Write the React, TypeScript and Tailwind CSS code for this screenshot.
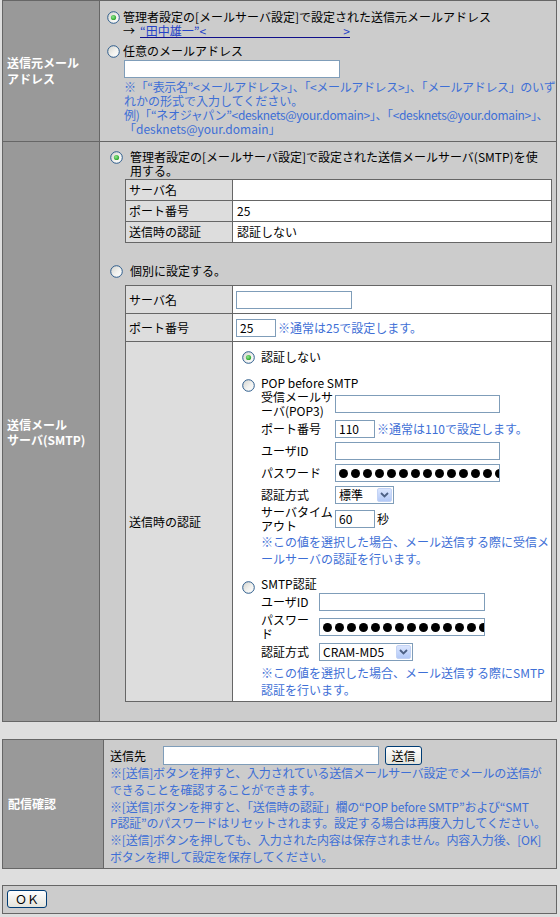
import React from "react";

const BLUE = "text-[#3e6fd6]";

function Radio({ checked = false, className = "" }: { checked?: boolean; className?: string }) {
  return (
    <svg width="13" height="13" viewBox="0 0 13 13" className={"shrink-0 " + className}>
      <defs>
        <linearGradient id="rfill" x1="0" y1="0" x2="1" y2="1">
          <stop offset="0" stopColor="#d2d2cc" />
          <stop offset="0.55" stopColor="#f2f2ef" />
          <stop offset="1" stopColor="#ffffff" />
        </linearGradient>
        <radialGradient id="rdot" cx="0.4" cy="0.4" r="0.7">
          <stop offset="0" stopColor="#8fe88f" />
          <stop offset="1" stopColor="#1d9a1d" />
        </radialGradient>
      </defs>
      <circle cx="6.5" cy="6.5" r="5.8" fill="url(#rfill)" stroke="#2d5c8c" strokeWidth="1" />
      {checked && <circle cx="6.5" cy="6.5" r="2.6" fill="url(#rdot)" />}
    </svg>
  );
}

function Input({ className = "", value = "" }: { className?: string; value?: string }) {
  return (
    <div className={"shrink-0 border border-[#7f9db9] bg-white flex items-center pl-[3px] leading-[14px] " + className}>
      {value}
    </div>
  );
}

function Password({ className = "" }: { className?: string }) {
  return (
    <div className={"shrink-0 h-[18px] border border-[#7f9db9] bg-white flex items-center gap-[3px] pl-[3px] overflow-hidden " + className}>
      {Array.from({ length: 16 }).map((_, i) => (
        <span key={i} className="shrink-0 w-[9px] h-[9px] rounded-full bg-black" />
      ))}
    </div>
  );
}

function Select({ label, className = "" }: { label: string; className?: string }) {
  return (
    <div className={"shrink-0 h-[18px] border border-[#7f9db9] bg-white flex items-center " + className}>
      <span className="flex-1 pl-[3px] leading-[14px] whitespace-nowrap">{label}</span>
      <span className="w-[15px] h-[14px] mr-[1px] rounded-[2px] bg-linear-to-b from-[#dbe6fe] to-[#b3c9f7] border border-[#c3d3f5] flex items-center justify-center">
        <svg width="9" height="6" viewBox="0 0 9 6">
          <path d="M1 1 L4.5 4.5 L8 1" fill="none" stroke="#4d6185" strokeWidth="1.8" />
        </svg>
      </span>
    </div>
  );
}

function XpButton({ children, className = "" }: { children: React.ReactNode; className?: string }) {
  return (
    <div className={"shrink-0 border border-[#003c74] rounded-[3px] bg-linear-to-b from-white to-[#e4e4dc] flex items-center justify-center leading-[14px] " + className}>
      {children}
    </div>
  );
}

function FRow({ label, labelW, h, children }: { label: React.ReactNode; labelW: string; h: string; children: React.ReactNode }) {
  return (
    <div className={"flex items-center " + h}>
      <div className={"shrink-0 whitespace-nowrap " + labelW}>{label}</div>
      {children}
    </div>
  );
}

export default function App() {
  return (
    <div className="font-['Noto_Sans_CJK_JP','Noto_Sans','DejaVu_Sans',sans-serif] w-[560px] min-h-[917px] bg-[#dedede] text-[12px] leading-[14px] text-black">
      {/* Section 1 */}
      <div className="ml-[2px] w-[555px] border border-[#666]">
        {/* Row: 送信元メールアドレス */}
        <div className="flex h-[141px] border-b border-[#666]">
          <div className="w-[97px] shrink-0 bg-[#999] border-r border-[#666] flex items-center pl-[4px] text-white font-bold leading-[16px]">
            <div>送信元メール<br />アドレス</div>
          </div>
          <div className="flex-1 bg-[#ccc] pl-[7px] pt-[9px] whitespace-nowrap">
            <div className="flex items-start">
              <Radio checked className="mt-[1px]" />
              <div className="ml-[3px]">
                <div>管理者設定の[メールサーバ設定]で設定された送信元メールアドレス</div>
                <div className="flex items-end h-[14px]">
                  <span className="inline-block w-[17px]">→</span>
                  <span className="inline-flex w-[210px] justify-between border-b border-[#10108a] text-[#2442c8] leading-[12px]">
                    <span>“田中雄一”&lt;</span>
                    <span>&gt;</span>
                  </span>
                </div>
              </div>
            </div>
            <div className="flex items-start mt-[6px]">
              <Radio className="mt-[1px]" />
              <div className="ml-[3px]">任意のメールアドレス</div>
            </div>
            <Input className="ml-[17px] mt-[2px] w-[216px] h-[18px]" />
            <div className={"ml-[17px] mt-[2px] " + BLUE}>
              <div className="tracking-[-0.35px]">※「“表示名”&lt;メールアドレス&gt;」、「&lt;メールアドレス&gt;」、「メールアドレス」のいず</div>
              <div>れかの形式で入力してください。</div>
              <div className="tracking-[-0.35px]">例)「“ネオジャパン”&lt;desknets@your.domain&gt;」、「&lt;desknets@your.domain&gt;」、</div>
              <div>「desknets@your.domain」</div>
            </div>
          </div>
        </div>

        {/* Row: 送信メールサーバ(SMTP) */}
        <div className="flex h-[579px]">
          <div className="w-[97px] shrink-0 bg-[#999] border-r border-[#666] flex items-center pl-[4px] text-white font-bold leading-[15px]">
            <div>送信メール<br />サーバ(SMTP)</div>
          </div>
          <div className="flex-1 bg-[#ccc] pl-[10px] pt-[8px] whitespace-nowrap">
            <div className="flex items-start">
              <Radio checked className="mt-[1px]" />
              <div className="ml-[7px]">
                <div>管理者設定の[メールサーバ設定]で設定された送信メールサーバ(SMTP)を使</div>
                <div>用する。</div>
              </div>
            </div>
            <div className="ml-[15px] mt-[1px] w-[427px] border border-[#666] bg-white divide-y divide-[#666]">
              {[
                ["サーバ名", ""],
                ["ポート番号", "25"],
                ["送信時の認証", "認証しない"],
              ].map(([l, v]) => (
                <div key={l} className="flex">
                  <div className="w-[107px] h-[20px] shrink-0 border-r border-[#666] bg-[#ddd] pl-[3px] flex items-center">{l}</div>
                  <div className="flex-1 h-[20px] pl-[4px] flex items-center">{v}</div>
                </div>
              ))}
            </div>

            <div className="flex items-center mt-[21px] h-[14px]">
              <Radio />
              <div className="ml-[7px]">個別に設定する。</div>
            </div>

            <div className="ml-[15px] mt-[7px] w-[427px] border border-[#666] bg-white divide-y divide-[#666]">
              <div className="flex">
                <div className="w-[107px] h-[27px] shrink-0 border-r border-[#666] bg-[#ddd] pl-[3px] flex items-center">サーバ名</div>
                <div className="flex-1 h-[27px] pl-[3px] flex items-center">
                  <Input className="w-[116px] h-[18px]" />
                </div>
              </div>
              <div className="flex">
                <div className="w-[107px] h-[27px] shrink-0 border-r border-[#666] bg-[#ddd] pl-[3px] flex items-center">ポート番号</div>
                <div className="flex-1 h-[27px] pl-[3px] flex items-center">
                  <Input className="w-[40px] h-[18px]" value="25" />
                  <span className={"ml-[2px] " + BLUE}>※通常は25で設定します。</span>
                </div>
              </div>
              <div className="flex">
                <div className="w-[107px] shrink-0 border-r border-[#666] bg-[#ddd] pl-[3px] flex items-center">送信時の認証</div>
                <div className="flex-1 pl-[9px] pt-[8px] pb-[3px]">
                  <div className="flex items-center h-[14px]">
                    <Radio checked />
                    <span className="ml-[6px]">認証しない</span>
                  </div>

                  <div className="flex items-start mt-[12px]">
                    <Radio className="mt-[3px]" />
                    <div className="ml-[6px]">
                      <div>POP before SMTP</div>
                      <FRow label={<>受信メールサ<br />ーバ(POP3)</>} labelW="w-[74px]" h="h-[28px]">
                        <Input className="w-[165px] h-[18px]" />
                      </FRow>
                      <FRow label="ポート番号" labelW="w-[74px]" h="h-[22px]">
                        <Input className="w-[40px] h-[18px]" value="110" />
                        <span className={"ml-[2px] " + BLUE}>※通常は110で設定します。</span>
                      </FRow>
                      <FRow label="ユーザID" labelW="w-[74px]" h="h-[22px]">
                        <Input className="w-[165px] h-[18px]" />
                      </FRow>
                      <FRow label="パスワード" labelW="w-[74px]" h="h-[22px]">
                        <Password className="w-[165px]" />
                      </FRow>
                      <FRow label="認証方式" labelW="w-[74px]" h="h-[22px]">
                        <Select label="標準" className="w-[59px]" />
                      </FRow>
                      <FRow label={<>サーバタイム<br />アウト</>} labelW="w-[74px]" h="h-[26px]">
                        <Input className="w-[40px] h-[18px]" value="60" />
                        <span className="ml-[2px]">秒</span>
                      </FRow>
                      <div className={"mt-[1px] leading-[17px] " + BLUE}>
                        <div>※この値を選択した場合、メール送信する際に受信メ</div>
                        <div>ールサーバの認証を行います。</div>
                      </div>
                    </div>
                  </div>

                  <div className="flex items-start mt-[10px]">
                    <Radio className="mt-[4px]" />
                    <div className="ml-[6px]">
                      <div>SMTP認証</div>
                      <FRow label="ユーザID" labelW="w-[58px]" h="h-[22px]">
                        <Input className="w-[166px] h-[18px]" />
                      </FRow>
                      <FRow label={<>パスワー<br />ド</>} labelW="w-[58px]" h="h-[28px]">
                        <Password className="w-[166px]" />
                      </FRow>
                      <FRow label="認証方式" labelW="w-[58px]" h="h-[22px]">
                        <Select label="CRAM-MD5" className="w-[94px]" />
                      </FRow>
                      <div className={"mt-[1px] leading-[17px] " + BLUE}>
                        <div>※この値を選択した場合、メール送信する際にSMTP</div>
                        <div>認証を行います。</div>
                      </div>
                    </div>
                  </div>
                </div>
              </div>
            </div>
          </div>
        </div>
      </div>

      {/* Section: 配信確認 */}
      <div className="ml-[2px] mt-[17px] w-[555px] h-[130px] border border-[#666] flex">
        <div className="w-[101px] shrink-0 bg-[#999] border-r border-[#666] flex items-center pl-[5px] text-white font-bold">
          配信確認
        </div>
        <div className="flex-1 bg-[#ccc] pl-[6px] pt-[6px] whitespace-nowrap">
          <div className="flex items-center h-[19px]">
            <span>送信先</span>
            <Input className="ml-[17px] w-[216px] h-[19px]" />
            <XpButton className="ml-[6px] w-[37px] h-[19px]">送信</XpButton>
          </div>
          <div className={"leading-[16.8px] tracking-[-0.2px] " + BLUE}>
            <div>※[送信]ボタンを押すと、入力されている送信メールサーバ設定でメールの送信が</div>
            <div>できることを確認することができます。</div>
            <div>※[送信]ボタンを押すと、「送信時の認証」欄の“POP before SMTP”および“SMT</div>
            <div>P認証”のパスワードはリセットされます。設定する場合は再度入力してください。</div>
            <div>※[送信]ボタンを押しても、入力された内容は保存されません。内容入力後、[OK]</div>
            <div>ボタンを押して設定を保存してください。</div>
          </div>
        </div>
      </div>

      {/* Section: OK */}
      <div className="ml-[2px] mt-[16px] w-[555px] h-[29px] border border-[#666] bg-[#ccc] pl-[4px] pt-[4px]">
        <XpButton className="w-[40px] h-[18px]">ＯＫ</XpButton>
      </div>
    </div>
  );
}
